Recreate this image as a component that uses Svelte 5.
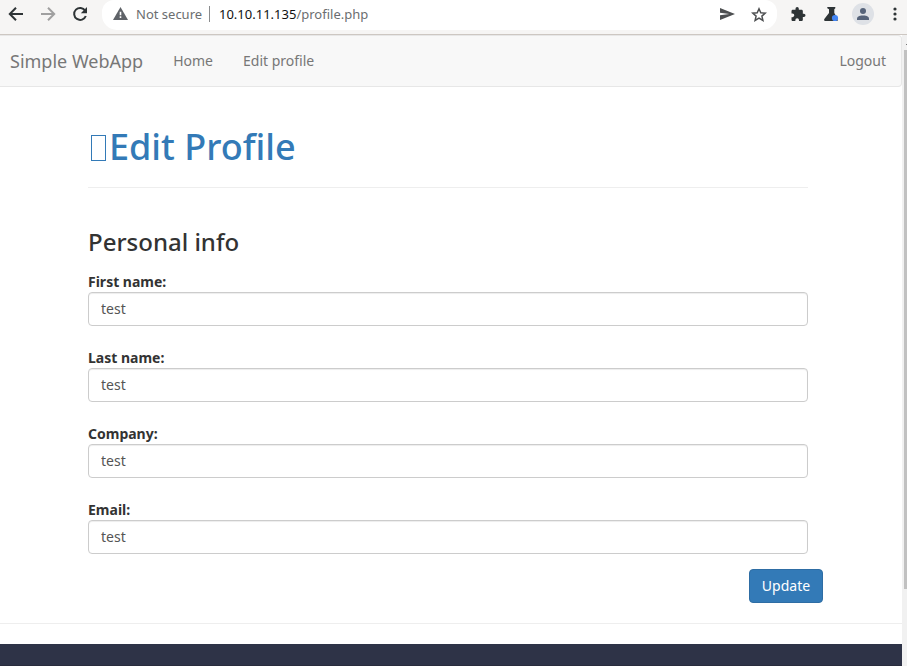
<script>
  const fields = $state([
    { id: 'firstname', label: 'First name:', value: 'test' },
    { id: 'lastname', label: 'Last name:', value: 'test' },
    { id: 'company', label: 'Company:', value: 'test' },
    { id: 'email', label: 'Email:', value: 'test' }
  ]);
</script>

<div class="browser">
  <header class="toolbar">
    <div class="navigation">
      <svg width="16" height="16" viewBox="0 0 16 16"><path d="M15 8H2M8 1.8 1.8 8 8 14.2" /></svg>
      <svg class="disabled" width="16" height="16" viewBox="0 0 16 16"><path d="M1 8h13M8 1.8 14.2 8 8 14.2" /></svg>
      <svg width="16" height="16" viewBox="0 0 16 16"><path d="M13.2 4.6A6 6 0 1 0 13.8 10" /><path class="solid" d="M15 1v6.2H8.8Z" /></svg>
    </div>
    <div class="address">
      <svg class="warning" width="15" height="13" viewBox="0 0 15 13"><path fill="#5f6368" d="M7.5 0 15 13H0Z" /><path fill="#fff" d="M6.7 4.7h1.6v3.5H6.7zM6.7 9.3h1.6v1.6H6.7z" /></svg>
      <span class="security">Not secure</span>
      <span class="divider"></span>
      <span class="url"><b>10.10.11.135</b>/profile.php</span>
      <svg class="send" width="15" height="12" viewBox="2 3 21 18" preserveAspectRatio="none"><path fill="#4d4f51" d="M2 21 23 12 2 3v7l13 2-13 2Z" /></svg>
      <svg class="star" width="16" height="15" viewBox="0 0 16 15"><path d="m8 1.8 1.8 4 4.4.4-3.3 2.9 1 4.3L8 11.1l-3.9 2.3 1-4.3-3.3-2.9 4.4-.4Z" fill="none" stroke="#4d4f51" stroke-width="1.5" /></svg>
    </div>
    <div class="extensions">
      <svg class="puzzle" width="15" height="14" viewBox="2 1 21 21"><path d="M20.5 11H19V7c0-1.1-.9-2-2-2h-4V3.5a2.5 2.5 0 0 0-5 0V5H4c-1.1 0-2 .9-2 2v3.8h1.5a2.7 2.7 0 0 1 0 5.4H2V20c0 1.1.9 2 2 2h3.8v-1.5a2.7 2.7 0 0 1 5.4 0V22H17c1.1 0 2-.9 2-2v-4h1.5a2.5 2.5 0 0 0 0-5Z" /></svg>
      <svg class="flask" width="16" height="15" viewBox="0 0 16 15"><path d="M3.3 0h8v1.3l-1 1V6l3.3 5.5V14H.8q-1.2-.8-.3-2.3L5 6V2.3l-1.7-1Z" /><circle cx="11" cy="11" r="3.1" fill="#4285f4" /></svg>
      <span class="avatar"><svg width="12" height="12" viewBox="0 0 12 12"><circle cx="6" cy="3" r="3" /><path d="M0 12v-1.5C0 8 4 7.5 6 7.5s6 .5 6 3V12Z" /></svg></span>
      <svg class="dots" width="4" height="14" viewBox="0 0 4 14"><circle cx="2" cy="2" r="1.6" /><circle cx="2" cy="7" r="1.6" /><circle cx="2" cy="12" r="1.6" /></svg>
    </div>
  </header>

  <div class="viewport">
    <div class="page">
      <nav>
        <a class="brand" href="#home">Simple WebApp</a>
        <a href="#home">Home</a>
        <a href="#profile">Edit profile</a>
        <a class="logout" href="#logout">Logout</a>
      </nav>
      <main>
        <h1><span class="glyph"></span>Edit Profile</h1>
        <h3>Personal info</h3>
        <form onsubmit={(event) => event.preventDefault()}>
          {#each fields as field (field.id)}
            <div class="field">
              <label for={field.id}>{field.label}</label>
              <input id={field.id} type="text" bind:value={field.value} />
            </div>
          {/each}
          <button type="submit">Update</button>
        </form>
      </main>
      <footer></footer>
    </div>
    <div class="scrollbar"><span class="arrow"></span><span class="thumb"></span></div>
  </div>
</div>

<style>
  :global(body) { margin: 0; overflow: hidden; background: #fff; }
  * { box-sizing: border-box; }
  .browser { display: flex; flex-direction: column; width: 907px; height: 666px; overflow: hidden; font: 14px/20px "Noto Sans", sans-serif; color: #333; }
  svg { display: block; flex: none; }
  .toolbar { display: flex; height: 35px; flex: none; background: #f6f5f4; border-bottom: 1px solid #cdc7c2; }
  .navigation { display: flex; gap: 16px; width: 102px; padding: 6px 0 0 8px; }
  .navigation path { fill: none; stroke: #2e3436; stroke-width: 2; }
  .navigation .disabled path { stroke: #a0a0a0; }
  .navigation .solid { fill: #2e3436; stroke: none; }
  .address { display: flex; align-items: center; width: 675px; height: 30px; padding: 0 10px 2px 11px; background: #fff; border-radius: 12px 12px 15px 15px; font-size: 13px; color: #6b6e70; white-space: nowrap; }
  .warning { margin-top: -1px; }
  .security { width: 66px; margin-left: 8px; }
  .divider { width: 1px; height: 16px; margin: 0 9px 0 7px; background: #8a8c8e; }
  .url { margin-right: auto; }
  .url b { font-weight: 400; color: #111; }
  .send { margin-right: 16px; }
  .extensions { display: flex; align-items: flex-start; padding: 7px 0 0 14px; fill: #2e3436; }
  .flask { margin-left: 18px; }
  .avatar { display: flex; align-items: center; justify-content: center; width: 22px; height: 22px; margin: -4px 0 0 12px; background: #dee1e6; border-radius: 50%; fill: #56637a; }
  .dots { margin-left: 19px; }
  .viewport { display: flex; flex: 1; min-height: 0; }
  .page { display: flex; flex-direction: column; width: 902px; }
  nav { display: flex; align-items: center; height: 52px; padding: 0 15px 0 10px; background: #f8f8f8; border: 1px solid #e7e7e7; border-left: 0; border-radius: 0 4px 4px 0; }
  nav a { color: #777; text-decoration: none; margin-right: 30px; }
  nav .brand { font-size: 18px; }
  nav .logout { margin: 0 0 0 auto; }
  main { height: 537px; padding: 40px 79px 0 88px; border-bottom: 1px solid #eee; }
  h1, h3 { font-weight: 500; line-height: 1.1; margin: 0; }
  h1 { display: flex; height: 61px; width: 720px; font-size: 36px; color: #337ab7; border-bottom: 1px solid #eee; }
  .glyph { width: 15px; height: 26px; margin: 8px 3px 0 3px; border: 1px solid #337ab7; }
  h3 { margin-top: 41px; height: 43px; font-size: 24px; }
  form { display: flex; flex-direction: column; }
  .field { display: flex; flex-direction: column; width: 720px; height: 76px; }
  label { height: 20px; font-weight: 700; }
  input { height: 34px; padding: 5px 12px 7px; border: 1px solid #ccc; border-radius: 4px; box-shadow: inset 0 1px 1px rgba(0,0,0,.075); color: #555; font: inherit; }
  button { width: 74px; height: 34px; margin: -7px 0 0 661px; padding: 0; color: #fff; background: #337ab7; border: 1px solid #2e6da4; border-radius: 4px; font: inherit; }
  footer { height: 22px; margin-top: 20px; background: #2e3347; border-bottom: 1px solid #292c3d; }
  .scrollbar { width: 5px; background: #f1f1f1; }
  .arrow { display: block; width: 1px; height: 1px; margin: 9px 0 5px 4px; background: #777; }
  .thumb { display: block; width: 3px; height: 539px; margin-left: 2px; background: #c1c1c1; }
</style>
